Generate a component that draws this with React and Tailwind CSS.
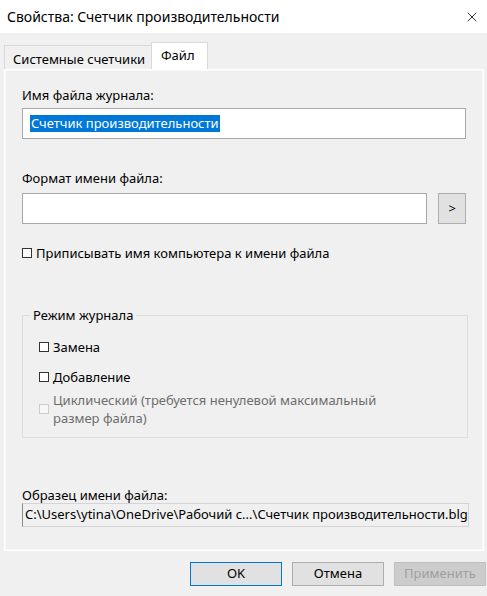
import { X } from "lucide-react";

function Check({ disabled, children }) {
  return (
    <div className="flex items-center gap-[4px]">
      <span
        className={
          disabled
            ? "w-[10px] h-[10px] shrink-0 border border-[#cccccc] bg-[#f7f7f7]"
            : "w-[10px] h-[10px] shrink-0 border border-[#333333] bg-white"
        }
      />
      <span className={disabled ? "text-[#6d6d6d] leading-[18px]" : "leading-[16px]"}>{children}</span>
    </div>
  );
}

export default function App() {
  return (
    <div
      className="w-[487px] h-[596px] bg-[#f0f0f0] flex flex-col text-[13px] text-black overflow-hidden"
      style={{ fontFamily: '"Noto Sans", "Liberation Sans", sans-serif' }}
    >
      {/* Title bar */}
      <div className="h-[33px] bg-white flex items-center justify-between pl-[7px] pr-[7px] shrink-0">
        <span className="text-[14px] leading-[18px]">Свойства: Счетчик производительности</span>
        <X size={16} strokeWidth={1.2} className="text-black" />
      </div>

      {/* Tabs */}
      <div className="flex items-end h-[36px] pl-[4px] shrink-0">
        <div className="h-[24px] w-[148px] border border-b-0 border-[#d9d9d9] flex items-center pl-[8px] pt-[2px] leading-[16px]">
          Системные счетчики
        </div>
        <div className="h-[27px] w-[57px] -ml-[1px] bg-white border border-b-0 border-[#d9d9d9] flex items-center pl-[9px] pb-[3px] relative z-10 leading-[16px]">
          Файл
        </div>
      </div>

      {/* Panel */}
      <div className="mx-[4px] w-[480px] h-[482px] border border-white shadow-[inset_0_0_0_1px_#f9f9f9] flex flex-col px-[17px] shrink-0">
        <div className="mt-[17px] leading-[16px]">Имя файла журнала:</div>
        <div className="mt-[5px] h-[31px] bg-white border border-[#a8a8a8] flex items-center pl-[7px]">
          <span className="bg-[#0078d7] text-white leading-[17px] pl-[1px] pr-[1px]">Счетчик производительности</span>
        </div>

        <div className="mt-[31px] leading-[16px]">Формат имени файла:</div>
        <div className="mt-[7px] h-[31px] flex gap-[11px]">
          <div className="w-[408px] h-full bg-white border border-[#a8a8a8]" />
          <div className="w-[28px] h-full bg-[#e1e1e1] border border-[#adadad] flex items-center justify-center">
            &gt;
          </div>
        </div>

        <div className="mt-[21px]">
          <Check>Приписывать имя компьютера к имени файла</Check>
        </div>

        <fieldset className="mt-[46px] w-[446px] h-[131px] border border-[#dcdcdc]">
          <legend className="ml-[7px] px-[3px] leading-[16px]">Режим журнала</legend>
          <div className="px-[16px]">
            <div className="mt-[16px]">
              <Check>Замена</Check>
            </div>
            <div className="mt-[14px]">
              <Check>Добавление</Check>
            </div>
            <div className="mt-[6px]">
              <Check disabled>
                Циклический (требуется ненулевой максимальный
                <br />
                размер файла)
              </Check>
            </div>
          </div>
        </fieldset>

        <div className="mt-[49px] leading-[16px]">Образец имени файла:</div>
        <div className="h-[24px] w-[447px] border border-[#d4d4d4] border-l-[#8a8a8a] flex items-center pl-[2px] whitespace-nowrap">
          C:\Users\ytina\OneDrive\Рабочий с...\Счетчик производительности.blg
        </div>
      </div>

      {/* Buttons */}
      <div className="mt-[11px] flex justify-end gap-[10px] pr-[1px]">
        <button className="w-[92px] h-[24px] bg-[#e1e1e1] border border-[#0078d7]">OK</button>
        <button className="w-[92px] h-[24px] bg-[#e1e1e1] border border-[#adadad]">Отмена</button>
        <button className="w-[92px] h-[24px] bg-[#cccccc] border border-[#bfbfbf] text-[#a0a0a0]">Применить</button>
      </div>
    </div>
  );
}
